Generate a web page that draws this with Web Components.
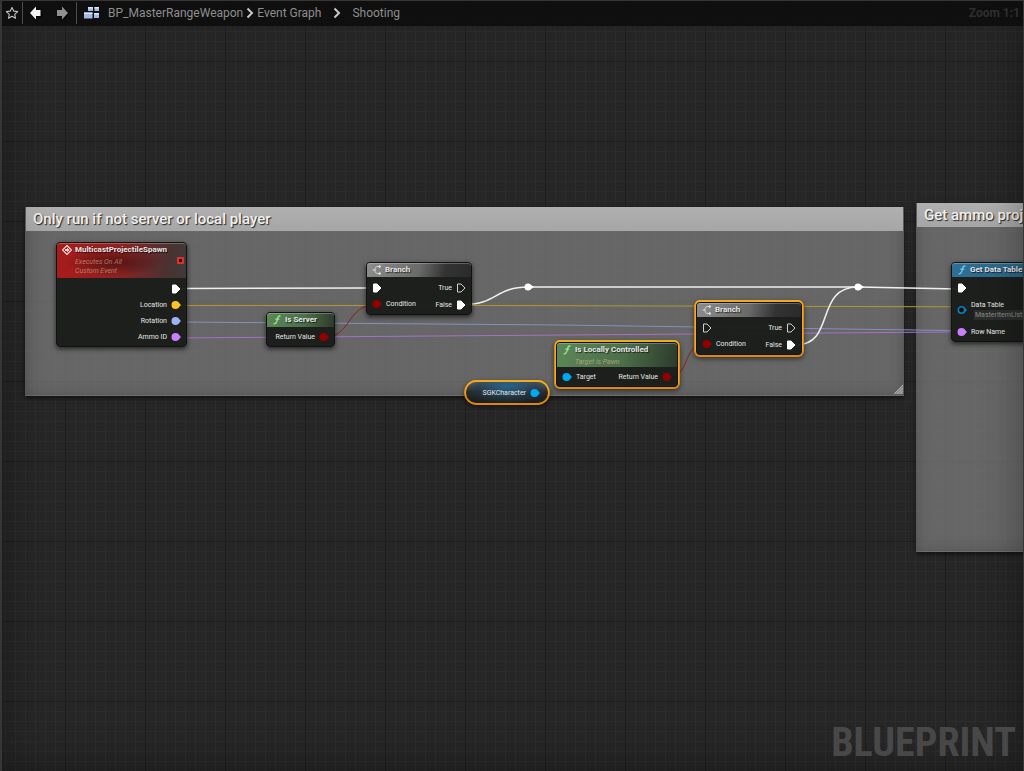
<!DOCTYPE html>
<html lang="en">
<head>
<meta charset="utf-8">
<meta name="viewport" content="width=device-width, initial-scale=1">
<title>BP_MasterRangeWeapon</title>
<style>
  html, body {
    height: 100%;
    margin: 0;
  }

  body {
    background: #262626;
    color: #e6e6e6;
    font-family: Roboto, "Liberation Sans", sans-serif;
    overflow: hidden;
  }
</style>
</head>
<body>

<graph-editor>
  <graph-toolbar slot="toolbar"></graph-toolbar>

  <graph-comment heading="Only run if not server or local player" style="left: 25px; top: 207px; width: 879px; height: 189px"></graph-comment>
  <graph-comment heading="Get ammo proj" style="left: 916px; top: 203px; width: 160px; height: 349px"></graph-comment>

  <graph-wires></graph-wires>

  <graph-node kind="event" heading="MulticastProjectileSpawn" style="left: 56px; top: 242px; width: 131px">
    <span slot="subtitle">Executes On All<br>Custom Event</span>
    <graph-pin slot="out" type="exec" linked></graph-pin>
    <graph-pin slot="out" type="vector" linked>Location</graph-pin>
    <graph-pin slot="out" type="rotator" linked>Rotation</graph-pin>
    <graph-pin slot="out" type="name" linked>Ammo ID</graph-pin>
  </graph-node>

  <graph-node kind="pure" heading="Is Server" style="left: 266px; top: 312px; width: 69px">
    <graph-pin slot="out" type="bool" linked>Return Value</graph-pin>
  </graph-node>

  <graph-node kind="branch" heading="Branch" style="left: 366px; top: 262px; width: 106px">
    <graph-pin slot="in" type="exec" linked></graph-pin>
    <graph-pin slot="in" type="bool" linked>Condition</graph-pin>
    <graph-pin slot="out" type="exec">True</graph-pin>
    <graph-pin slot="out" type="exec" linked>False</graph-pin>
  </graph-node>

  <graph-variable style="left: 466px; top: 382px; width: 82px">
    <graph-pin side="out" type="object" linked>SGKCharacter</graph-pin>
  </graph-variable>

  <graph-node kind="pure" heading="Is Locally Controlled" selected style="left: 556px; top: 342px; width: 122px">
    <span slot="subtitle">Target is Pawn</span>
    <graph-pin slot="in" type="object" linked>Target</graph-pin>
    <graph-pin slot="out" type="bool" linked>Return Value</graph-pin>
  </graph-node>

  <graph-node kind="branch" heading="Branch" selected style="left: 696px; top: 302px; width: 106px">
    <graph-pin slot="in" type="exec"></graph-pin>
    <graph-pin slot="in" type="bool" linked>Condition</graph-pin>
    <graph-pin slot="out" type="exec">True</graph-pin>
    <graph-pin slot="out" type="exec" linked>False</graph-pin>
  </graph-node>

  <graph-node kind="function" heading="Get Data Table" style="left: 951px; top: 262px; width: 130px">
    <graph-pin slot="in" type="exec" linked></graph-pin>
    <graph-pin slot="in" type="table" asset="MasterItemList">Data Table</graph-pin>
    <graph-pin slot="in" type="name" linked>Row Name</graph-pin>
  </graph-node>
</graph-editor>

<script>
class GraphEditor extends HTMLElement {
  constructor() {
    super();
    this.attachShadow({ mode: 'open' });
    this.shadowRoot.innerHTML = `
      <style>
        :host {
          display: flex;
          flex-direction: column;
          box-sizing: border-box;
          height: 100vh;
          border: solid #363636;
          border-width: 1px 1px 0 2px;
          position: relative;
          overflow: hidden;
          background: #262626;
        }

        .grid, .shade {
          position: absolute;
          inset: 0;
        }

        .grid {
          background-image:
            linear-gradient(90deg, #1e1e1e 1px, transparent 1px),
            linear-gradient(#1e1e1e 1px, transparent 1px),
            linear-gradient(90deg, #2c2c2c 1px, transparent 1px),
            linear-gradient(#2c2c2c 1px, transparent 1px);
          background-size: 80px 80px, 80px 80px, 10px 10px, 10px 10px;
          background-position: 63px 60px, 63px 60px, 3px 0, 3px 0;
        }

        .shade {
          box-shadow: inset 0 0 40px rgba(0, 0, 0, 0.35);
          pointer-events: none;
        }

        /* node coordinates are measured from the window corner */
        .canvas {
          position: absolute;
          inset: -1px -1px 0 -2px;
        }

        ::slotted([slot="toolbar"]) {
          position: relative;
          z-index: 1;
        }

        .watermark {
          position: relative;
          margin: auto 7px 4px auto;
          color: #484848;
          font-family: "Roboto Condensed", Roboto, "Liberation Sans", sans-serif;
          font-size: 40px;
          font-weight: 700;
          line-height: 48px;
        }
      </style>
      <div class="grid"></div>
      <div class="canvas"><slot></slot></div>
      <div class="shade"></div>
      <slot name="toolbar"></slot>
      <div class="watermark">BLUEPRINT</div>
    `;
  }
}

class GraphToolbar extends HTMLElement {
  constructor() {
    super();
    this.attachShadow({ mode: 'open' });
    this.shadowRoot.innerHTML = `
      <style>
        :host {
          display: flex;
          align-items: center;
          box-sizing: border-box;
          height: 25px;
          padding: 0 3px 1px;
          background: rgba(12, 12, 12, 0.88);
          color: #8e8e8e;
          font-size: 12px;
          line-height: 16px;
        }

        button {
          display: flex;
          padding: 0;
          border: 0;
          background: none;
          color: inherit;
        }

        .sep {
          width: 1px;
          height: 22px;
          background: #4c4c4c;
        }

        .history {
          display: flex;
          gap: 12px;
          padding: 0 7px 0 6px;
        }

        .history svg {
          filter: drop-shadow(1px 1px 1px #000);
        }

        nav {
          display: flex;
          align-items: center;
          flex: 1;
          padding-left: 7px;
        }

        nav > svg:first-child {
          margin-right: 8px;
        }

        .chevron {
          width: 8px;
          margin: 0 3px;
        }

        .wide {
          margin: 0 11px 0 12px;
        }

        a {
          color: inherit;
          text-decoration: none;
        }

        .zoom {
          color: #2e2e2e;
          font-weight: 700;
        }
      </style>
      <button aria-label="Favorite">
        <svg width="14" height="14" viewBox="0 0 14 14"><path d="M7 1.400l1.700 3.700 4 .5-3 2.700.8 4L7 10.300l-3.500 2 .8-4-3-2.700 4-.5z" fill="none" stroke="#c4c4c4" stroke-width="1.100" stroke-linejoin="round"/></svg>
      </button>
      <span class="sep" style="margin-left: 3px"></span>
      <div class="history">
        <button aria-label="Back"><svg width="14" height="14" viewBox="0 0 14 14"><path d="M1 7l6-6.500v3.500h4.500v6H7v3.500z" fill="#f2f2f2"/></svg></button>
        <button aria-label="Forward"><svg width="14" height="14" viewBox="0 0 14 14"><path d="M13 7L7 .5V4H2v6h5v3.500z" fill="#8f8f8f"/></svg></button>
      </div>
      <span class="sep"></span>
      <nav aria-label="Graph path">
        <svg width="16" height="14" viewBox="0 0 16 14">
          <path d="M4 1h5v4H4zM10.500 1H15v4h-4.500zM0 6.500h8.500v6H0zM10 7h5v5h-5z" fill="#a3b9e6"/>
          <path d="M4 1h5v1.500H4zM10.500 1H15v1.500h-4.500zM0 6.500h8.500V8H0zM10 7h5v1.500h-5z" fill="#dde7fa"/>
        </svg>
        <a href="#class">BP_MasterRangeWeapon</a>
        <svg class="chevron" height="12" viewBox="0 0 8 12"><path d="M1.500 1.500L6 6l-4.500 4.500" fill="none" stroke="#c8c8c8" stroke-width="2"/></svg>
        <a href="#graph">Event Graph</a>
        <svg class="chevron wide" height="12" viewBox="0 0 8 12"><path d="M1.500 1.500L6 6l-4.500 4.500" fill="none" stroke="#c8c8c8" stroke-width="2"/></svg>
        <a href="#shooting">Shooting</a>
      </nav>
      <span class="zoom">Zoom 1:1</span>
    `;
  }
}

class GraphComment extends HTMLElement {
  constructor() {
    super();
    this.attachShadow({ mode: 'open' });
    this.shadowRoot.innerHTML = `
      <style>
        :host {
          display: block;
          position: absolute;
          box-sizing: border-box;
          padding: 0 1px;
          background: rgba(132, 132, 132, 0.68);
          box-shadow: 0 2px 5px rgba(0, 0, 0, 0.6), inset 0 0 14px rgba(40, 40, 40, 0.35), inset 0 -1px #7c7c7c;
        }

        .title {
          padding: 2px 7px;
          background: linear-gradient(#b0b0b0, #a6a6a6);
          color: #f0f0f0;
          font-size: 15px;
          font-weight: 500;
          line-height: 20px;
          text-shadow: 1px 1px 1px #222;
          white-space: nowrap;
        }

        svg {
          position: absolute;
          right: 1px;
          bottom: 2px;
        }
      </style>
      <div class="title"></div>
      <svg width="9" height="9" viewBox="0 0 9 9"><path d="M9 0v9H0z" fill="#8a8a8a"/><path d="M0 9l9-9M3 9l6-6M6 9l3-3" stroke="#acacac"/></svg>
    `;
  }

  connectedCallback() {
    this.shadowRoot.querySelector('.title').textContent = this.getAttribute('heading');
  }
}

class GraphWires extends HTMLElement {
  constructor() {
    super();
    this.attachShadow({ mode: 'open' });
    this.shadowRoot.innerHTML = `
      <style>
        :host {
          display: block;
          position: absolute;
          inset: 0;
        }

        svg {
          display: block;
          width: 100%;
          height: 100%;
          fill: none;
        }

        .exec {
          stroke: #f0f0f0;
          stroke-width: 1.500;
        }
      </style>
      <svg>
        <path d="M178 305.500H475L1023 307" stroke="#b8962e"/>
        <path d="M178 322L370 323.500L560 325L700 327L951 330.500" stroke="#8391c2"/>
        <path d="M178 338L951 332" stroke="#a870cc"/>
        <path d="M326 337C350 337 348 305 374 305" stroke="#8e2019"/>
        <path d="M668 378C690 378 682 345 704 345" stroke="#8e2019"/>
        <path d="M538 393C554 393 550 378 566 378" stroke="#1d7fb4"/>
        <path class="exec" d="M180 288.500L370 288"/>
        <path class="exec" d="M465 304.500C496 304.500 496 287 528 287H858L958 289"/>
        <path class="exec" d="M796 345C836 345 814 287 858 287"/>
        <g fill="#fff"><circle cx="528" cy="287" r="3.500"/><path d="M531 285l3 2-3 2z"/><circle cx="858" cy="287" r="3.500"/><path d="M861 285l3 2-3 2z"/></g>
      </svg>
    `;
  }
}

const HEADER_ICONS = {
  event: '<path d="M5 .5L9.500 5 5 9.500.5 5z" fill="none" stroke="#e8dada" stroke-width="1.200"/><path d="M3 4h2V2.500L7.500 5 5 7.500V6H3z" fill="#e8dada"/>',
  pure: '<path d="M8.500 1.300C6.500.3 6 2 5.500 4S4.500 9.500 1.500 8.800M3.300 4.200h4" fill="none" stroke="#9be88f" stroke-width="1.300"/>',
  function: '<path d="M8.500 1.300C6.500.3 6 2 5.500 4S4.500 9.500 1.500 8.800M3.300 4.200h4" fill="none" stroke="#6fc8f5" stroke-width="1.300"/>',
  branch: '<path d="M.5 5H3M8.500 1.500H6C3.500 1.500 3 3 3 5s.5 3.500 3 3.500h2.500M7 0l2 1.500L7 3M7 7l2 1.500L7 10" fill="none" stroke="#dcdcdc"/>',
};

class GraphNode extends HTMLElement {
  constructor() {
    super();
    this.attachShadow({ mode: 'open' });
    this.shadowRoot.innerHTML = `
      <style>
        :host {
          display: block;
          position: absolute;
          box-sizing: border-box;
          border: 1px solid #101210;
          border-radius: 4px;
          background: rgba(24, 27, 24, 0.95);
          box-shadow: 0 2px 5px rgba(0, 0, 0, 0.65);
        }

        :host([selected]) {
          box-shadow: 0 -1px 0 1px #f0ac1c, 0 0 0 2px #e0860c, 0 2px 5px 2px rgba(0, 0, 0, 0.5);
        }

        header {
          display: flex;
          gap: 3px;
          box-sizing: border-box;
          min-height: 14px;
          padding: 1px 5px 0;
          border-radius: 3px 3px 0 0;
          box-shadow: inset 0 1px rgba(255, 255, 255, 0.25);
          font-size: 8px;
          line-height: 12px;
        }

        header svg {
          flex: none;
          margin-top: 1px;
        }

        :host([kind="event"]) header {
          min-height: 35px;
          background: radial-gradient(ellipse at 45% 55%, rgba(50, 10, 10, 0.6), transparent 50%), linear-gradient(100deg, #a51c1c 10%, #8c2222 50%, #4a3232 85%, #3c3c3a);
        }

        :host([kind="pure"]) header {
          background: linear-gradient(100deg, #5c8658, #4c6f49 55%, #2c3a2b);
        }

        :host([kind="function"]) header {
          background: linear-gradient(100deg, #2f6f92, #27607f);
        }

        :host([kind="branch"]) header {
          background: linear-gradient(100deg, #8c8c8c, #6a6a6a 50%, #333 75%, #2a2b2a);
        }

        .title {
          font-weight: 700;
          text-shadow: 1px 1px 1px rgba(0, 0, 0, 0.7);
          white-space: nowrap;
        }

        .text {
          flex: 1;
        }

        ::slotted([slot="subtitle"]) {
          display: block;
          padding-top: 2px;
          color: rgba(225, 190, 150, 0.6);
          font-size: 7px;
          font-style: italic;
          line-height: 9px;
        }

        .delegate {
          width: 3px;
          height: 3px;
          margin-top: 13px;
          margin-right: -3px;
          border: 2px solid #e0302a;
          border-radius: 1px;
          background: #300;
        }

        .body {
          display: flex;
          justify-content: space-between;
          padding: 2px 5px 1px;
        }

        .out {
          display: flex;
          flex-direction: column;
          align-items: flex-end;
          margin-left: auto;
        }
      </style>
      <header>
        <svg width="10" height="10" viewBox="0 0 10 10"></svg>
        <div class="text">
          <div class="title"></div>
          <slot name="subtitle"></slot>
        </div>
      </header>
      <div class="body">
        <div class="in"><slot name="in"></slot></div>
        <div class="out"><slot name="out"></slot></div>
      </div>
    `;
  }

  connectedCallback() {
    const kind = this.getAttribute('kind');
    this.shadowRoot.querySelector('svg').innerHTML = HEADER_ICONS[kind];
    this.shadowRoot.querySelector('.title').textContent = this.getAttribute('heading');
    if (kind === 'event') {
      const delegate = document.createElement('span');
      delegate.className = 'delegate';
      this.shadowRoot.querySelector('header').appendChild(delegate);
    }
  }
}

class GraphVariable extends HTMLElement {
  constructor() {
    super();
    this.attachShadow({ mode: 'open' });
    this.shadowRoot.innerHTML = `
      <style>
        :host {
          display: flex;
          justify-content: flex-end;
          position: absolute;
          box-sizing: border-box;
          padding: 3px 8px 2px;
          border-radius: 11px;
          background: radial-gradient(ellipse at 50% 20%, #24638a, rgba(34, 60, 78, 0.6) 50%, transparent 75%), linear-gradient(#6a6a6a, #262a2c 45%, #1b1d1e);
          box-shadow: 0 -1px 0 1px #f0ac1c, 0 0 0 2px #e0860c, 0 2px 5px 2px rgba(0, 0, 0, 0.5);
        }
      </style>
      <slot></slot>
    `;
  }
}

const PIN_COLORS = {
  exec: '#ffffff',
  vector: '#fdc321',
  rotator: '#9fb2f5',
  name: '#c880ff',
  bool: '#930000',
  object: '#00a8f6',
  table: '#0a7fb8',
};

class GraphPin extends HTMLElement {
  constructor() {
    super();
    this.attachShadow({ mode: 'open' });
    this.shadowRoot.innerHTML = `
      <style>
        :host {
          display: flex;
          align-items: center;
          gap: 4px;
          height: 16px;
          font-size: 7px;
          line-height: 10px;
          white-space: nowrap;
        }

        :host([type="exec"]) {
          height: 17px;
        }

        :host([slot="out"]), :host([side="out"]) {
          flex-direction: row-reverse;
        }

        :host([asset]) {
          height: 28px;
        }

        svg {
          flex: none;
        }

        button {
          display: block;
          margin: 0 0 0 3px;
          padding: 0 1px;
          border: 0;
          background: #2c2e2c;
          color: #8a8a8a;
          font: inherit;
        }
      </style>
      <svg width="10" height="10" viewBox="0 0 10 10"></svg>
      <div class="label"><slot></slot></div>
    `;
  }

  connectedCallback() {
    const type = this.getAttribute('type');
    const color = PIN_COLORS[type];
    const linked = this.hasAttribute('linked');
    let shape;
    if (type === 'exec') {
      shape = `<path d="M1.500 1h3.500l4 4-4 4H1.500z" fill="${linked ? color : 'none'}" stroke="${linked ? color : '#cfcfcf'}" stroke-linejoin="round"/>`;
    } else {
      shape = linked
        ? `<circle cx="4.500" cy="5" r="4" fill="${color}"/>`
        : `<circle cx="4.500" cy="5" r="3.200" fill="#111" stroke="${color}" stroke-width="1.600"/>`;
      shape += `<path d="M8 3l2 2-2 2z" fill="${color}"/>`;
    }
    this.shadowRoot.querySelector('svg').innerHTML = shape;

    if (this.hasAttribute('asset')) {
      const picker = document.createElement('button');
      picker.textContent = this.getAttribute('asset');
      this.shadowRoot.querySelector('.label').appendChild(picker);
    }
  }
}

customElements.define('graph-editor', GraphEditor);
customElements.define('graph-toolbar', GraphToolbar);
customElements.define('graph-comment', GraphComment);
customElements.define('graph-wires', GraphWires);
customElements.define('graph-node', GraphNode);
customElements.define('graph-variable', GraphVariable);
customElements.define('graph-pin', GraphPin);
</script>
</body>
</html>
